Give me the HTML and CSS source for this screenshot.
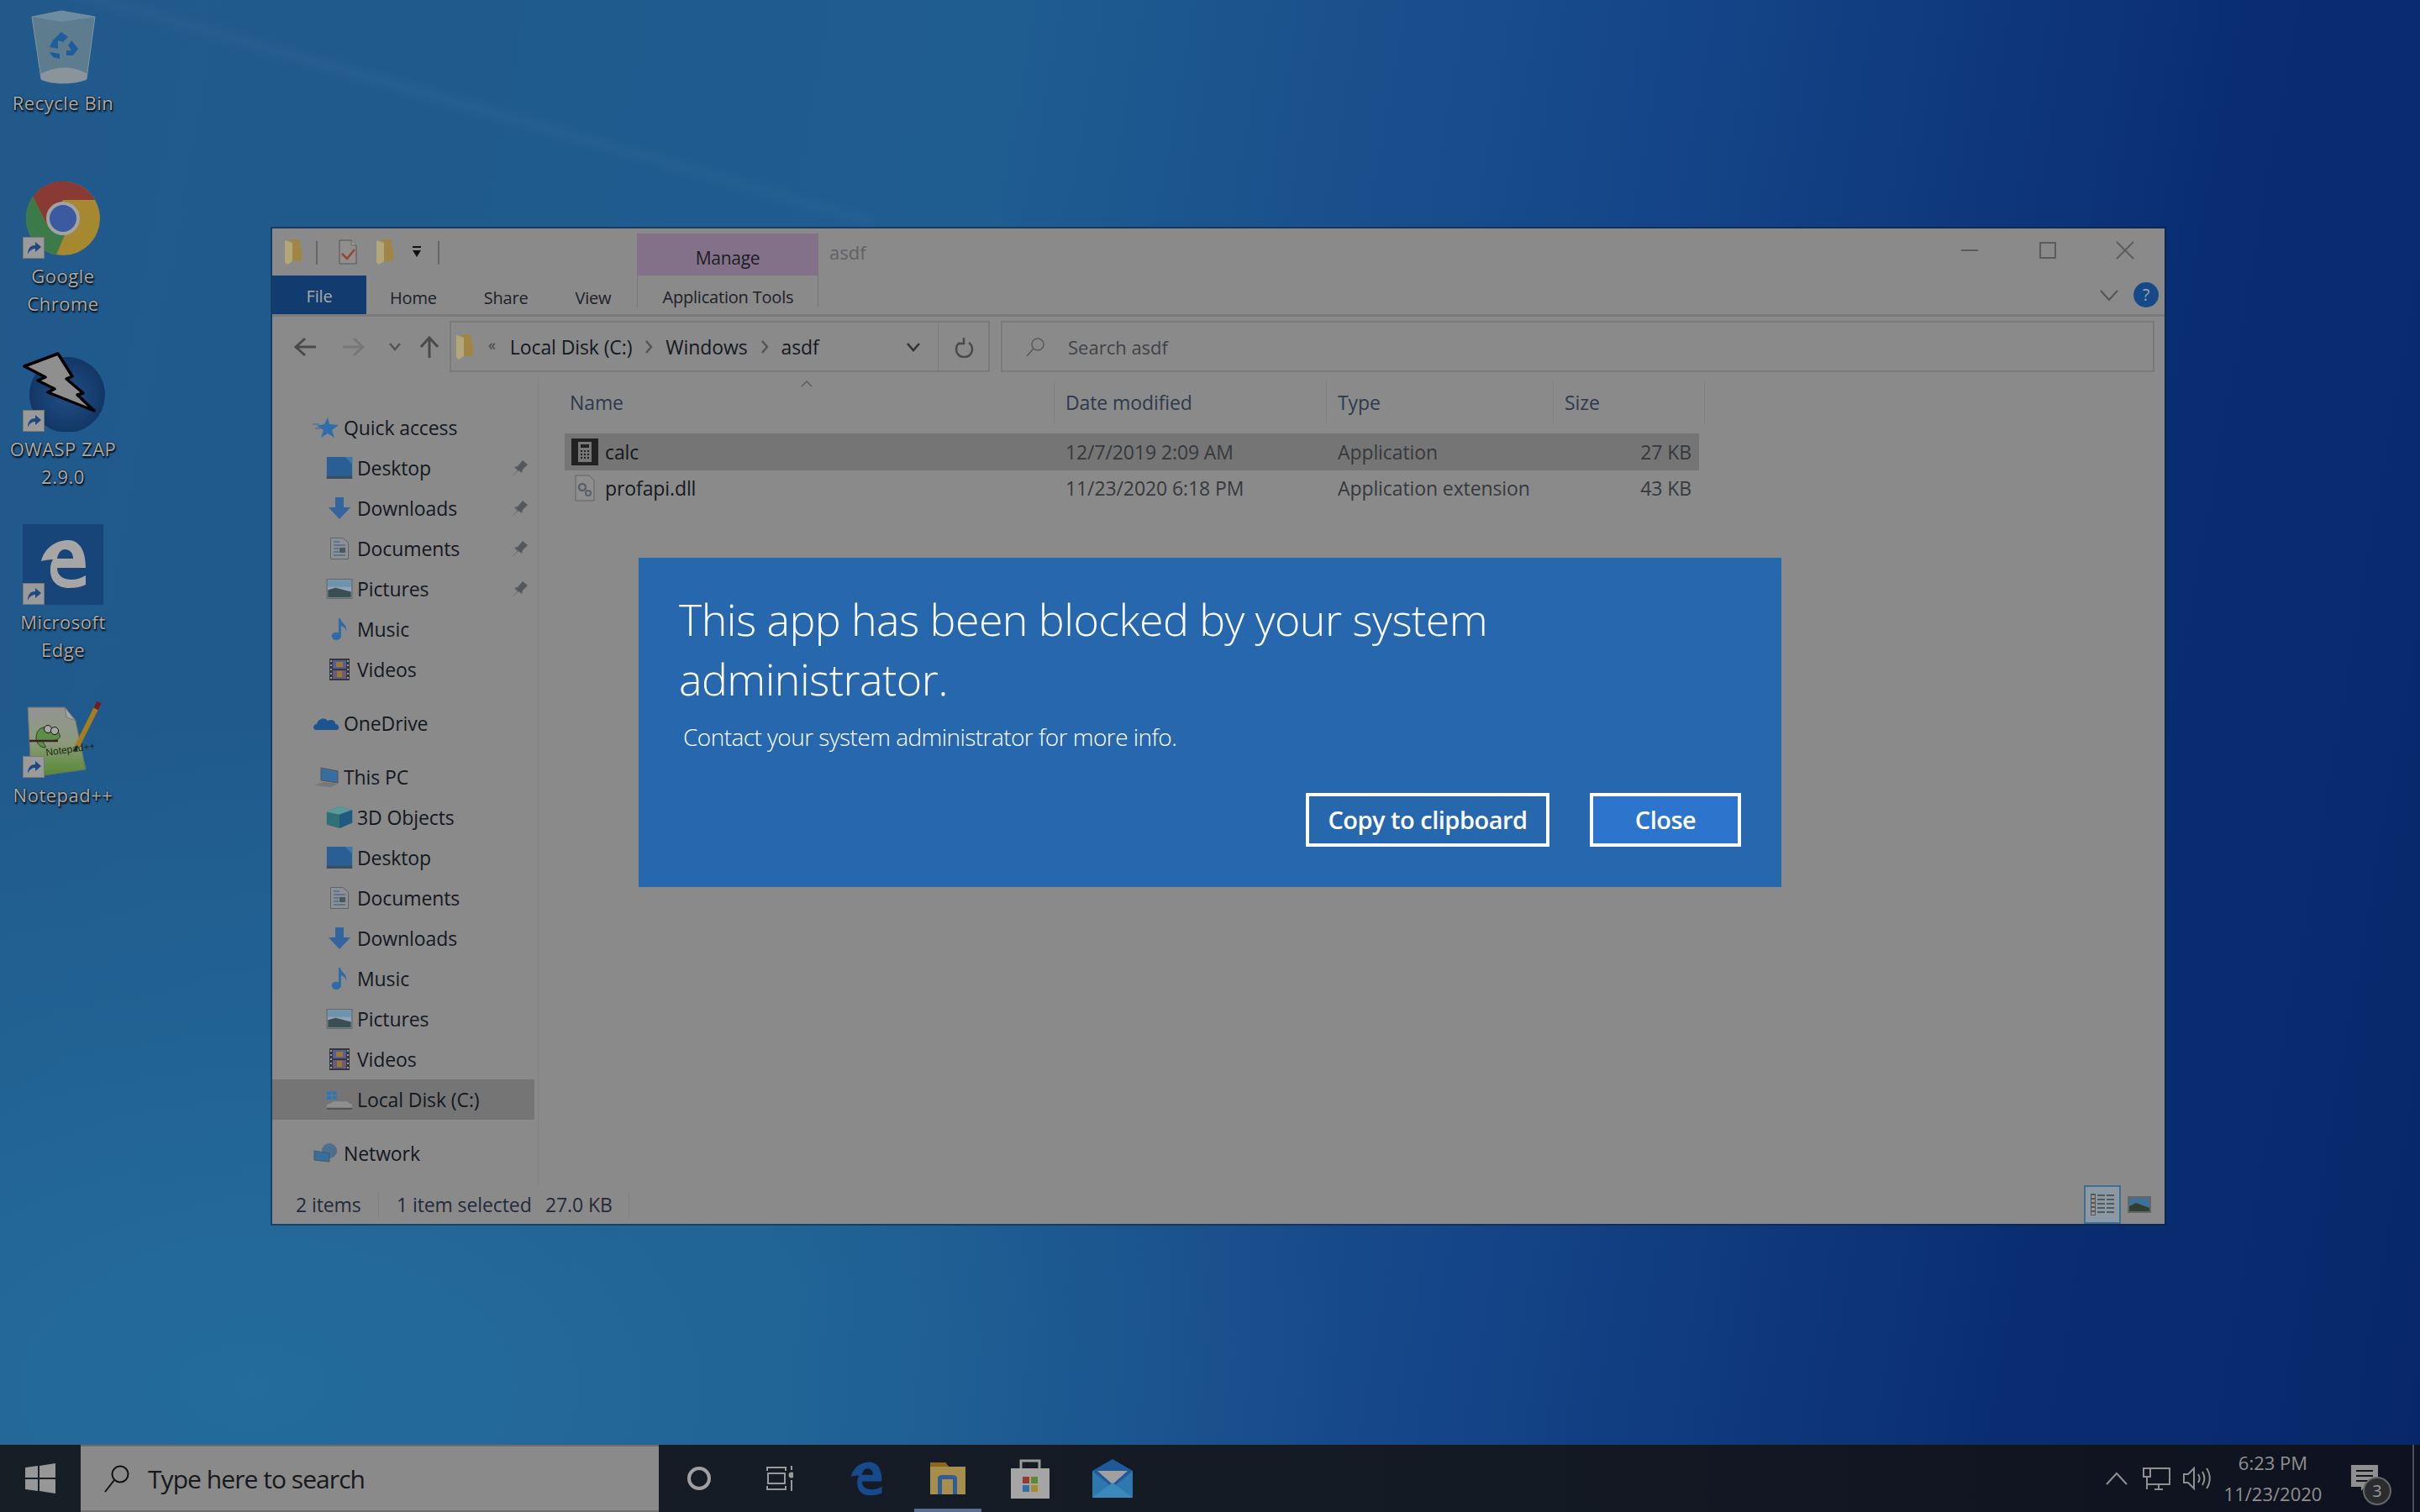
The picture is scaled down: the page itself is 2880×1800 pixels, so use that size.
FILE: index.html
```html
<!DOCTYPE html>
<html>
 <head>
  <meta charset="utf-8">
  <title>asdf</title>
  <link rel="stylesheet" href="styles.css">
 </head>
 <body>
  <svg class="defs" width="0" height="0">
   <symbol id="i-folder" viewBox="0 0 20 30"><path d="M4 0H18V10L20 11V26H8V4Z" fill="#9f8646"/><path d="M0 1 9 4V26L3 30 0 27Z" fill="#b3a679"/></symbol>
   <symbol id="i-short" viewBox="0 0 26 26"><rect x="0.500" y="0.500" width="25" height="25" fill="#9a9a9a" stroke="#777"/><path d="M6 21C6 13 10 10 15 10V6L22 12 15 18V14C11 14 8 16 6 21Z" fill="#1c4a80"/></symbol>
   <symbol id="i-desk" viewBox="0 0 28 24"><rect width="28" height="24" fill="#2a5f96"/><rect y="21" width="28" height="3" fill="#3c4d5c"/><path d="M20 0H28V8Z" fill="#3a77ad"/></symbol>
   <symbol id="i-down" viewBox="0 0 26 26"><path d="M8 0H18V12H26L13 26 0 12H8Z" fill="#32649d"/></symbol>
   <symbol id="i-docs" viewBox="0 0 22 26"><path d="M.5.5H15L21.500 6V25.500H.5Z" fill="#8f8f8f" stroke="#5d6670"/><path d="M4 5h7M4 9h14M4 13h6M4 17h6M4 21h14" stroke="#4a6c92" stroke-width="1.500"/><rect x="11" y="12" width="7" height="6" fill="#47585f"/></symbol>
   <symbol id="i-pics" viewBox="0 0 28 22"><rect x="1" y="1" width="26" height="20" fill="#8fa4b4" stroke="#666"/><path d="M2 12 10 10 26 14V20H2Z" fill="#3b4f50"/><rect x="2" y="2" width="24" height="7" fill="#6e93ad"/></symbol>
   <symbol id="i-music" viewBox="0 0 20 28"><ellipse cx="6" cy="23" rx="6" ry="5" fill="#2f6aa5"/><path d="M9 23V0H11C12 6 20 8 19 17 17 11 14 11 12 10V23Z" fill="#2f6aa5"/></symbol>
   <symbol id="i-video" viewBox="0 0 24 26"><rect width="24" height="26" fill="#33373c"/><rect x="4" y="2" width="16" height="10" fill="#5a5c9a"/><rect x="4" y="14" width="16" height="10" fill="#6a5a80"/><path d="M8 4h8v6H8zM9 15h6v7H9z" fill="#9a7a30"/><path d="M1 3h2M1 8h2M1 13h2M1 18h2M1 23h2M21 3h2M21 8h2M21 13h2M21 18h2M21 23h2" stroke="#999" stroke-width="2"/></symbol>
   <symbol id="i-pin" viewBox="0 0 24 24"><path d="M1 23 9 15 5 11 9 10 15 3 21 8 15 14 14 18 10 15Z" fill="#55595e"/></symbol>
   <symbol id="i-edge" viewBox="0 0 96 96"><path fill-rule="evenodd" d="M22 44C26 28 40 19 54 19 68 19 75 32 75 52H41C41 62 49 66 58 66 64 66 70 64 75 61V72C69 75 62 76 55 76 41 76 32 67 33 53 33 49 34 45 36 42 31 42 26 43 22 44ZM41 41H60C60 34 56 30 50 30 45 30 42 35 41 41Z"/></symbol>
  </svg>

  <div class="desktop">
   <div class="desk-icon">
    <div class="desk-pic">
     <svg width="96" height="96" viewBox="0 0 96 96"><path d="M11 14 46 7 86 14 76 88C60 94 36 94 22 88Z" fill="#5d7c8e" stroke="#7f95a2"/><path d="M11 14 46 20 86 14 46 7Z" fill="#6d8ca0"/><path d="M21 82C40 72 60 72 77 82L76 89C60 95 36 95 22 89Z" fill="#8a959b"/><path d="M36 42 46 32 54 38 48 44 42 42 42 52 32 50ZM58 42 66 52 60 60 52 60 52 54 58 54 54 48ZM32 56 44 58 44 64 36 62Z" fill="#1f5c9c"/></svg>
    </div>
    <div class="desk-label">Recycle Bin</div>
   </div>
   <div class="desk-icon">
    <div class="desk-pic">
     <svg width="96" height="96" viewBox="0 0 96 96"><circle cx="48" cy="48" r="44" fill="#a5882f"/><path d="M86 26H48L30 58 12 22A44 44 0 0 1 86 26Z" fill="#8a3a34"/><path d="M12 22 30 58 50 68 40 91A44 44 0 0 1 12 22Z" fill="#3d7a4a"/><circle cx="48" cy="48" r="20" fill="#a3a3a3"/><circle cx="48" cy="48" r="16" fill="#3b5aa0"/></svg>
     <svg class="short-mark"><use href="#i-short"/></svg>
    </div>
    <div class="desk-label">Google<br>Chrome</div>
   </div>
   <div class="desk-icon">
    <div class="desk-pic">
     <svg width="104" height="96" viewBox="0 0 104 96"><defs><radialGradient id="zap-g"><stop offset="0" stop-color="#214e86"/><stop offset="1" stop-color="#123766"/></radialGradient></defs><circle cx="53" cy="52" r="45" fill="url(#zap-g)"/><path d="M2 18 42 3 59 30 52 33 72 50 65 52 85 71 30 49 38 45 18 35 27 31Z" fill="#8f8f8f" stroke="#000" stroke-width="3.500" stroke-linejoin="round"/></svg>
     <svg class="short-mark"><use href="#i-short"/></svg>
    </div>
    <div class="desk-label">OWASP ZAP<br>2.9.0</div>
   </div>
   <div class="desk-icon">
    <div class="desk-pic desk-pic-edge">
     <svg class="edge-big" width="96" height="96"><use href="#i-edge"/></svg>
     <svg class="short-mark"><use href="#i-short"/></svg>
    </div>
    <div class="desk-label">Microsoft<br>Edge</div>
   </div>
   <div class="desk-icon">
    <div class="desk-pic">
     <svg width="96" height="96" viewBox="0 0 96 96">
      <defs><linearGradient id="np-g" x1="0" y1="0" x2="0" y2="1"><stop offset="0" stop-color="#949494"/><stop offset="0.500" stop-color="#8c9a7c"/><stop offset="1" stop-color="#54892f"/></linearGradient></defs>
      <path d="M6 12H50L63 28 75 86 10 95Z" fill="url(#np-g)" stroke="#6d6d6d"/>
      <path d="M50 12 52 24 63 28Z" fill="#a5a5a5" stroke="#777"/>
      <path d="M16 48C16 38 24 34 32 36 40 38 46 44 44 48 40 53 32 52 24 52 25 56 28 58 27 60 20 60 16 54 16 48Z" fill="#5c8f45" stroke="#24402a"/>
      <circle cx="30" cy="38" r="4.500" fill="#a8a8a8" stroke="#111"/><circle cx="38" cy="40" r="4.500" fill="#a8a8a8" stroke="#111"/>
      <path d="M8 52H42" stroke="#3a2020" stroke-width="2.500"/>
      <text class="np-word" x="28" y="70" transform="rotate(-8 28 70)">Notepad++</text>
      <path d="M65 58 89 10" stroke="#a67e1f" stroke-width="6"/><path d="M87 14 91 6" stroke="#6e1f1f" stroke-width="6"/><path d="M65 58 62 64" stroke="#222" stroke-width="3"/>
     </svg>
     <svg class="short-mark"><use href="#i-short"/></svg>
    </div>
    <div class="desk-label">Notepad++</div>
   </div>
  </div>

  <div class="window">
   <div class="titlebar">
    <svg class="qat-folder"><use href="#i-folder"/></svg>
    <span class="qat-sep"></span>
    <svg class="qat-check" width="22" height="30" viewBox="0 0 22 30"><path d="M1 1H15L21 7V29H1Z" fill="#8f8f8f" stroke="#555"/><path d="M15 1V7H21" fill="#9c9c9c" stroke="#666"/><path d="M4 17 10 23 19 12" fill="none" stroke="#9c4526" stroke-width="2.500"/></svg>
    <svg class="qat-folder qat-folder2"><use href="#i-folder"/></svg>
    <svg class="qat-drop" width="12" height="14" viewBox="0 0 12 14"><path d="M1 1H11" stroke="#111" stroke-width="2"/><path d="M1 5H11L6 13Z" fill="#111"/></svg>
    <span class="qat-sep qat-sep2"></span>
    <div class="manage-tab">Manage</div>
    <div class="win-title">asdf</div>
    <div class="caption">
     <svg width="22" height="22" viewBox="0 0 22 22"><path d="M0 11H20" stroke="#5c5c5c" stroke-width="2"/></svg>
     <svg width="22" height="22" viewBox="0 0 22 22"><rect x="2" y="2" width="18" height="18" fill="none" stroke="#5c5c5c" stroke-width="2"/></svg>
     <svg width="22" height="22" viewBox="0 0 22 22"><path d="M1 1 21 21M21 1 1 21" stroke="#5c5c5c" stroke-width="1.800"/></svg>
    </div>
   </div>
   <div class="tabs">
    <div class="tab-file">File</div>
    <div class="tab tab-home">Home</div>
    <div class="tab tab-share">Share</div>
    <div class="tab tab-view">View</div>
    <div class="tab-app">Application Tools</div>
    <svg class="ribbon-toggle" width="22" height="14" viewBox="0 0 22 14"><path d="M1 1 11 12 21 1" fill="none" stroke="#555" stroke-width="2"/></svg>
    <div class="help">?</div>
   </div>
   <div class="addr-row">
    <svg class="nav nav-back" width="28" height="24" viewBox="0 0 28 24"><path d="M14 2 3 12 14 22M3 12H27" fill="none" stroke="#4a4a4a" stroke-width="3"/></svg>
    <svg class="nav nav-fwd" width="28" height="24" viewBox="0 0 28 24"><path d="M14 2 25 12 14 22M25 12H1" fill="none" stroke="#777" stroke-width="3"/></svg>
    <svg class="nav nav-hist" width="16" height="10" viewBox="0 0 16 10"><path d="M2 1 8 8 14 1" fill="none" stroke="#555" stroke-width="2.500"/></svg>
    <svg class="nav nav-up" width="24" height="26" viewBox="0 0 24 26"><path d="M2 13 12 2 22 13M12 2V26" fill="none" stroke="#4a4a4a" stroke-width="3"/></svg>
    <div class="addr-box">
     <svg class="addr-folder"><use href="#i-folder"/></svg>
     <span class="crumb-more">«</span>
     <span class="crumb">Local Disk (C:)</span>
     <svg class="crumb-arrow" width="10" height="16" viewBox="0 0 10 16"><path d="M2 1 8 8 2 15" fill="none" stroke="#555" stroke-width="2.500"/></svg>
     <span class="crumb">Windows</span>
     <svg class="crumb-arrow" width="10" height="16" viewBox="0 0 10 16"><path d="M2 1 8 8 2 15" fill="none" stroke="#555" stroke-width="2.500"/></svg>
     <span class="crumb">asdf</span>
     <svg class="addr-drop" width="18" height="12" viewBox="0 0 18 12"><path d="M2 2 9 10 16 2" fill="none" stroke="#333" stroke-width="2.500"/></svg>
    </div>
    <div class="refresh-box">
     <svg width="24" height="26" viewBox="0 0 24 26"><path d="M6 7A9.500 9.500 0 1 0 17 7M11 1V8H4" transform="translate(1 1)" fill="none" stroke="#4a4a4a" stroke-width="2.500"/></svg>
    </div>
    <div class="search-box">
     <svg width="24" height="24" viewBox="0 0 24 24"><circle cx="14" cy="9" r="7" fill="none" stroke="#5a5a5a" stroke-width="1.500"/><path d="M9 14 1 23" stroke="#5a5a5a" stroke-width="1.500"/></svg>
     <span>Search asdf</span>
    </div>
   </div>

   <div class="content">
    <div class="sidebar">
     <div class="nav-row top"><svg class="nav-icon" viewBox="0 0 32 24"><path d="M18 0 20 8 31 9 23 15 26 24 18 19 10 24 13 15 5 10 14 8Z" fill="#2f6ea8"/><path d="M0 8H8M3 13H9" stroke="#4d7396" stroke-width="1.500"/></svg><span>Quick access</span></div>
     <div class="nav-row"><svg class="nav-icon"><use href="#i-desk"/></svg><span>Desktop</span><svg class="pin"><use href="#i-pin"/></svg></div>
     <div class="nav-row"><svg class="nav-icon"><use href="#i-down"/></svg><span>Downloads</span><svg class="pin"><use href="#i-pin"/></svg></div>
     <div class="nav-row"><svg class="nav-icon"><use href="#i-docs"/></svg><span>Documents</span><svg class="pin"><use href="#i-pin"/></svg></div>
     <div class="nav-row"><svg class="nav-icon"><use href="#i-pics"/></svg><span>Pictures</span><svg class="pin"><use href="#i-pin"/></svg></div>
     <div class="nav-row"><svg class="nav-icon"><use href="#i-music"/></svg><span>Music</span></div>
     <div class="nav-row"><svg class="nav-icon"><use href="#i-video"/></svg><span>Videos</span></div>
     <div class="nav-row top gap"><svg class="nav-icon" viewBox="0 0 32 18"><path d="M4 17C0 17 0 10 5 10 6 4 14 1 18 6 24 3 28 8 27 10 32 10 33 17 28 17Z" fill="#1d5490"/></svg><span>OneDrive</span></div>
     <div class="nav-row top gap"><svg class="nav-icon" viewBox="0 0 32 24"><path d="M10 1 30 5V19L10 16Z" fill="#356e9f" stroke="#555"/><path d="M2 22 12 18 30 20 22 24Z" fill="#777"/></svg><span>This PC</span></div>
     <div class="nav-row"><svg class="nav-icon" viewBox="0 0 28 24"><path d="M0 6 14 0 28 4V18L14 24 0 20Z" fill="#2f7078"/><path d="M0 6 14 0 28 4 14 9Z" fill="#5a9a9a"/><path d="M14 9 28 4V18L14 24Z" fill="#1f5a80"/></svg><span>3D Objects</span></div>
     <div class="nav-row"><svg class="nav-icon"><use href="#i-desk"/></svg><span>Desktop</span></div>
     <div class="nav-row"><svg class="nav-icon"><use href="#i-docs"/></svg><span>Documents</span></div>
     <div class="nav-row"><svg class="nav-icon"><use href="#i-down"/></svg><span>Downloads</span></div>
     <div class="nav-row"><svg class="nav-icon"><use href="#i-music"/></svg><span>Music</span></div>
     <div class="nav-row"><svg class="nav-icon"><use href="#i-pics"/></svg><span>Pictures</span></div>
     <div class="nav-row"><svg class="nav-icon"><use href="#i-video"/></svg><span>Videos</span></div>
     <div class="nav-row selected"><svg class="nav-icon" viewBox="0 0 28 24"><path d="M0 3H5V7H0ZM6 3H11V7H6ZM0 8H5V12H0ZM6 8H11V12H6Z" fill="#2f78b5"/><path d="M0 18 8 14H22L28 18V22H0Z" fill="#8f8f8f"/><rect y="21" width="28" height="2" fill="#555"/></svg><span>Local Disk (C:)</span></div>
     <div class="nav-row top gap"><svg class="nav-icon" viewBox="0 0 32 24"><circle cx="20" cy="9" r="9" fill="#4b6f8f"/><path d="M2 9 20 12V22L2 20Z" fill="#356e9f" stroke="#555"/></svg><span>Network</span></div>
    </div>
    <div class="files">
     <svg class="sort-caret" width="14" height="8" viewBox="0 0 14 8"><path d="M1 7 7 1 13 7" fill="none" stroke="#555" stroke-width="1.200"/></svg>
     <div class="file-head">
      <div class="col-h">Name</div>
      <div class="col-h">Date modified</div>
      <div class="col-h">Type</div>
      <div class="col-h">Size</div>
     </div>
     <div class="file-row selected">
      <div class="cell-name">
       <svg class="file-icon" width="32" height="32" viewBox="0 0 32 32"><rect width="32" height="32" fill="#222"/><rect x="8" y="4" width="16" height="24" fill="#777"/><rect x="11" y="7" width="10" height="4" fill="#222"/><path d="M11 14h2v2h-2zM15 14h2v2h-2zM19 14h2v2h-2zM11 18h2v2h-2zM15 18h2v2h-2zM19 18h2v2h-2zM11 22h2v2h-2zM15 22h2v2h-2zM19 22h2v2h-2z" fill="#222"/></svg>
       <span>calc</span>
      </div>
      <div class="cell">12/7/2019 2:09 AM</div>
      <div class="cell">Application</div>
      <div class="cell cell-size">27 KB</div>
     </div>
     <div class="file-row">
      <div class="cell-name">
       <svg class="file-icon" width="32" height="32" viewBox="0 0 32 32"><path d="M5 1H21L27 7V31H5Z" fill="#8e8e8e" stroke="#606468"/><circle cx="13" cy="15" r="4" fill="none" stroke="#5a6066" stroke-width="2.500"/><circle cx="20" cy="22" r="3" fill="none" stroke="#5a6066" stroke-width="2"/></svg>
       <span>profapi.dll</span>
      </div>
      <div class="cell">11/23/2020 6:18 PM</div>
      <div class="cell">Application extension</div>
      <div class="cell cell-size">43 KB</div>
     </div>
    </div>
   </div>

   <div class="statusbar">
    <span class="st-count">2 items</span>
    <span class="st-sel">1 item selected</span>
    <span class="st-size">27.0 KB</span>
    <div class="view-btns">
     <div class="view-on">
      <svg width="28" height="26" viewBox="0 0 28 26"><rect x="0" y="0" width="6" height="26" fill="#555"/><path d="M1 2h4v3H1zM1 7h4v3H1zM1 12h4v3H1zM1 17h4v3H1zM1 22h4v3H1z" fill="#999"/><path d="M8 2h9M19 2h9M8 7h9M19 7h9M8 12h9M19 12h9M8 17h9M19 17h9M8 22h9M19 22h9" stroke="#444" stroke-width="1.500"/></svg>
     </div>
     <svg class="view-thumb" width="28" height="20" viewBox="0 0 28 20"><rect x="1" y="1" width="26" height="18" fill="#3e7098" stroke="#666" stroke-width="2"/><path d="M2 12 10 8 26 14V18H2Z" fill="#2f4030"/></svg>
    </div>
   </div>
  </div>

  <div class="dialog">
   <div class="dlg-title">This app has been blocked by your system administrator.</div>
   <div class="dlg-body">Contact your system administrator for more info.</div>
   <div class="dlg-btns">
    <div class="btn">Copy to clipboard</div>
    <div class="btn btn-close">Close</div>
   </div>
  </div>

  <div class="taskbar">
   <div class="start">
    <svg width="36" height="36" viewBox="0 0 36 36"><path d="M0 5 15 3V17H0ZM17 3 36 0V17H17ZM0 19H15V33L0 31ZM17 19H36V36L17 33Z" fill="#979797"/></svg>
   </div>
   <div class="tb-search">
    <svg width="38" height="34" viewBox="0 0 34 34"><circle cx="21" cy="12" r="9.500" fill="none" stroke="#111" stroke-width="2"/><path d="M14 19 3 33" stroke="#111" stroke-width="2"/></svg>
    <span>Type here to search</span>
   </div>
   <div class="tb-cell"><svg width="30" height="32" viewBox="0 0 30 32"><circle cx="15" cy="16" r="12" fill="none" stroke="#a0a0a0" stroke-width="4"/></svg></div>
   <div class="tb-cell"><svg width="32" height="30" viewBox="0 0 32 30"><path d="M1 6V1M23 6V1M1 2H23M2 9H22V21H2ZM1 24V29M23 24V29M1 28H23" fill="none" stroke="#9a9a9a" stroke-width="2"/><path d="M30 0V5M30 17V30" stroke="#9a9a9a" stroke-width="2"/><circle cx="30" cy="11" r="3.500" fill="#9a9a9a"/></svg></div>
   <div class="tb-cell tb-wide"><svg class="tb-edge" width="46" height="46" viewBox="14 14 66 66"><use href="#i-edge" width="96" height="96"/></svg></div>
   <div class="tb-cell tb-wide tb-active">
    <svg width="42" height="38" viewBox="0 0 42 38"><path d="M0 0H18L22 5H42V38H0Z" fill="#a88e4c"/><path d="M0 0H18L22 5H0Z" fill="#8a6818"/><path d="M9 38V20C9 15 11 15 20 15 30 15 32 15 32 20V38H27V20H14V38Z" fill="#2f5e96"/></svg>
   </div>
   <div class="tb-cell tb-wide">
    <svg width="46" height="48" viewBox="0 0 46 48"><path d="M12 12V3H34V12" fill="none" stroke="#9a9a9a" stroke-width="3"/><rect y="12" width="46" height="36" fill="#a5a5a5"/><rect x="14" y="22" width="8" height="8" fill="#9a3a2a"/><rect x="24" y="22" width="8" height="8" fill="#5a8a30"/><rect x="14" y="32" width="8" height="8" fill="#2f70a8"/><rect x="24" y="32" width="8" height="8" fill="#a88a2a"/></svg>
   </div>
   <div class="tb-cell tb-wide">
    <svg width="48" height="46" viewBox="0 -4 48 46"><rect y="10" width="48" height="32" fill="#2f78ae"/><path d="M0 10 24 30 48 10 24 -4Z" fill="#1e5a9a"/><path d="M6 10H42L24 26Z" fill="#a0a0a0"/><path d="M0 42 24 24 48 42Z" fill="#3a88bc"/></svg>
   </div>
   <div class="tray">
    <div class="tray-cell"><svg width="26" height="16" viewBox="0 0 26 16"><path d="M1 15 13 2 25 15" fill="none" stroke="#8f8f8f" stroke-width="2"/></svg></div>
    <div class="tray-cell"><svg width="34" height="28" viewBox="0 0 34 28"><path d="M1 2H32V21H5M5 12V27M14 27H24M19 21V27" fill="none" stroke="#8f8f8f" stroke-width="2"/><rect x="1" y="2" width="8" height="10" fill="none" stroke="#8f8f8f" stroke-width="2"/></svg></div>
    <div class="tray-cell"><svg width="34" height="28" viewBox="0 0 34 28"><path d="M1 9H6L13 2V26L6 19H1Z" fill="none" stroke="#8f8f8f" stroke-width="2"/><path d="M18 9C20 12 20 16 18 19M23 6C26 11 26 17 23 22M28 2C33 9 33 19 28 26" fill="none" stroke="#8f8f8f" stroke-width="2"/></svg></div>
    <div class="clock"><div>6:23 PM</div><div>11/23/2020</div></div>
    <div class="action">
     <svg width="32" height="32" viewBox="0 0 32 32"><path d="M0 0H32V26H16L12 31V26H0Z" fill="#8f8f8f"/><path d="M6 7H26M6 13H26M6 19H26" stroke="#12161f" stroke-width="2"/></svg>
     <div class="badge">3</div>
    </div>
    <div class="show-desk"></div>
   </div>
  </div>
 </body>
</html>
```

FILE: styles.css
```css
html, body {
  margin: 0;
  padding: 0;
  width: 2880px;
  height: 1800px;
  overflow: hidden;
}
body {
  position: relative;
  display: flex;
  flex-direction: column;
  font-family: "Open Sans", "Liberation Sans", sans-serif;
  background-image:
    linear-gradient(196deg, rgba(255,255,255,0) 240px, rgba(255,255,255,0.02) 254px, rgba(255,255,255,0) 268px),
    radial-gradient(ellipse 1300px 800px at 300px 1650px, #236c9c 0%, rgba(35,108,156,0) 100%),
    linear-gradient(100deg, #21598b 0%, #1f5c90 38%, #154689 62%, #0a2d72 84%, #08276b 100%);
  background-size: 1040px 272px, 100% 100%, 100% 100%;
  background-repeat: no-repeat;
}
.defs {
  position: absolute;
}

/* desktop icons */
.desktop {
  flex: 1;
  padding-top: 6px;
}
.desk-icon {
  width: 150px;
  height: 206px;
}
.desk-pic {
  position: relative;
  width: 96px;
  height: 96px;
  margin-left: 27px;
}
.desk-pic-edge {
  background-color: #174479;
}
.edge-big {
  fill: #a6a6a6;
}
.np-word {
  font-family: "Liberation Sans", sans-serif;
  font-size: 12px;
  fill: #1c2a14;
}
.short-mark {
  position: absolute;
  left: 0;
  bottom: 0;
  width: 26px;
  height: 26px;
}
.desk-label {
  margin-top: 4px;
  font-size: 22px;
  line-height: 33px;
  text-align: center;
  color: #a9a9a9;
  letter-spacing: 0.5px;
  text-shadow: 1px 2px 2px #000, 0 0 2px #111;
}

/* explorer window */
.window {
  position: absolute;
  left: 324px;
  top: 272px;
  width: 2252px;
  height: 1185px;
  display: flex;
  flex-direction: column;
  background-color: #8a8a8a;
  color: #14181f;
  font-size: 23px;
  letter-spacing: -0.1px;
  box-shadow: 0 0 0 2px rgba(10,30,60,0.5);
}
.titlebar {
  height: 56px;
  display: flex;
  align-items: center;
  position: relative;
}
.qat-folder {
  width: 20px;
  height: 30px;
  margin-left: 15px;
}
.qat-sep {
  width: 2px;
  height: 28px;
  margin-left: 17px;
  margin-top: 2px;
  background-color: #666;
}
.qat-check {
  margin-left: 25px;
}
.qat-folder2 {
  margin-left: 23px;
}
.qat-drop {
  margin-left: 22px;
}
.qat-sep2 {
  margin-left: 19px;
}
.manage-tab {
  width: 216px;
  height: 50px;
  margin-left: 235px;
  margin-top: 6px;
  display: flex;
  align-items: center;
  justify-content: center;
  padding-top: 8px;
  box-sizing: border-box;
  background-color: #83718a;
  font-size: 21px;
  letter-spacing: -0.3px;
  color: #1d1d24;
}
.win-title {
  margin-left: 13px;
  color: #5f6266;
  font-size: 22px;
  letter-spacing: 0;
}
.caption {
  margin-left: auto;
  margin-right: 36px;
  display: flex;
  gap: 70px;
  margin-top: -4px;
}
.tabs {
  height: 46px;
  display: flex;
  align-items: center;
  font-size: 20px;
  letter-spacing: -0.2px;
  color: #1d2128;
  border-bottom: 3px solid #7b7b7b;
}
.tab-file {
  width: 112px;
  height: 46px;
  line-height: 50px;
  text-align: center;
  background-color: #123c70;
  color: #a8a8a8;
}
.tab {
  margin-top: 6px;
}
.tab-home {
  margin-left: 28px;
}
.tab-share {
  margin-left: 56px;
}
.tab-view {
  margin-left: 56px;
}
.tab-app {
  width: 216px;
  height: 38px;
  margin-left: 31px;
  align-self: flex-start;
  line-height: 52px;
  text-align: center;
  border-left: 1px solid #777;
  border-right: 1px solid #777;
  box-sizing: border-box;
}
.ribbon-toggle {
  margin-left: auto;
  margin-right: 18px;
  margin-top: 2px;
}
.help {
  width: 30px;
  height: 30px;
  margin-right: 7px;
  border-radius: 50%;
  background-color: #154a86;
  color: #9aa5b0;
  font-size: 20px;
  line-height: 30px;
  text-align: center;
}
.addr-row {
  height: 61px;
  margin-top: 5px;
  margin-bottom: 6px;
  display: flex;
  align-items: center;
  padding-right: 12px;
}
.nav {
  flex: none;
}
.nav-back {
  margin-left: 25px;
}
.nav-fwd {
  margin-left: 30px;
}
.nav-hist {
  margin-left: 27px;
}
.nav-up {
  margin-left: 21px;
}
.addr-box {
  width: 582px;
  height: 61px;
  margin-left: 12px;
  box-sizing: border-box;
  display: flex;
  align-items: center;
  border: 2px solid #7a7a7a;
  border-right-width: 1px;
  color: #14181f;
}
.addr-folder {
  width: 20px;
  height: 30px;
  margin-left: 6px;
}
.crumb-more {
  margin-left: 18px;
  margin-right: 2px;
  margin-top: -6px;
  font-size: 18px;
  color: #444;
}
.crumb {
  margin-left: 15px;
}
.crumb-arrow {
  margin-left: 15px;
}
.addr-drop {
  margin-left: auto;
  margin-right: 20px;
}
.refresh-box {
  width: 61px;
  height: 61px;
  box-sizing: border-box;
  display: flex;
  align-items: center;
  justify-content: center;
  border: 2px solid #7a7a7a;
  border-left: 0;
}
.search-box {
  flex: 1;
  height: 61px;
  margin-left: 13px;
  box-sizing: border-box;
  display: flex;
  align-items: center;
  gap: 26px;
  padding-left: 28px;
  border: 2px solid #7a7a7a;
  color: #3f4348;
  font-size: 22px;
  letter-spacing: 0;
}

/* nav pane + file list */
.content {
  flex: 1;
  display: flex;
  min-height: 0;
}
.sidebar {
  width: 312px;
  padding-top: 36px;
  padding-right: 4px;
  padding-bottom: 40px;
  border-right: 1px solid #838383;
}
.nav-row {
  height: 48px;
  display: flex;
  align-items: center;
  padding-left: 64px;
  padding-right: 5px;
  box-sizing: border-box;
}
.nav-row.top {
  padding-left: 48px;
}
.nav-row.gap {
  margin-top: 16px;
}
.nav-row.selected {
  background-color: #757575;
}
.nav-icon {
  width: 32px;
  height: 26px;
  margin-right: 5px;
  flex: none;
}
.pin {
  width: 24px;
  height: 24px;
  margin-left: auto;
}
.files {
  position: relative;
  flex: 1;
  padding-left: 31px;
}
.sort-caret {
  position: absolute;
  left: 312px;
  top: 4px;
}
.file-head {
  height: 51px;
  margin-top: 4px;
  display: grid;
  grid-template-columns: 583px 324px 270px 180px;
  width: 1357px;
}
.col-h {
  display: flex;
  align-items: center;
  padding-left: 13px;
  border-right: 1px solid #808080;
  color: #2e3a4c;
}
.col-h:first-child {
  padding-left: 6px;
}
.file-row {
  width: 1350px;
  height: 42px;
  display: grid;
  grid-template-columns: 583px 324px 270px 173px;
  align-items: center;
}
.file-head + .file-row {
  margin-top: 12px;
}
.file-row.selected {
  height: 44px;
  background-color: #757575;
}
.cell-name {
  display: flex;
  align-items: center;
  padding-left: 8px;
}
.file-icon {
  margin-right: 8px;
}
.cell {
  padding-left: 13px;
  color: #36393d;
}
.cell-size {
  padding-right: 9px;
  text-align: right;
}
.statusbar {
  height: 46px;
  display: flex;
  align-items: center;
  position: relative;
  color: #232a3a;
  font-size: 23px;
  letter-spacing: -0.1px;
}
.st-count {
  width: 98px;
  margin-left: 28px;
  border-right: 1px solid #808080;
}
.st-sel {
  margin-left: 21px;
  width: 177px;
}
.st-size {
  width: 99px;
  border-right: 1px solid #808080;
}
.view-btns {
  margin-left: auto;
  margin-right: 16px;
  display: flex;
  align-items: center;
  gap: 8px;
}
.view-on {
  width: 44px;
  height: 46px;
  box-sizing: border-box;
  display: flex;
  align-items: center;
  justify-content: center;
  border: 2px solid #3e6f90;
  background-color: #8a99a3;
}

/* blocked dialog */
.dialog {
  position: absolute;
  left: 760px;
  top: 664px;
  width: 1360px;
  height: 392px;
  box-sizing: border-box;
  display: flex;
  flex-direction: column;
  padding: 37px 48px 0;
  background-color: #2767ae;
  color: #fff;
}
.dlg-title {
  width: 1040px;
  font-size: 52px;
  font-weight: 300;
  line-height: 71px;
  letter-spacing: -0.6px;
}
.dlg-body {
  margin-top: 14px;
  margin-left: 5px;
  font-size: 28px;
  font-weight: 300;
  line-height: 40px;
  letter-spacing: -0.55px;
}
.dlg-btns {
  display: flex;
  justify-content: flex-end;
  gap: 48px;
  margin-top: 47px;
}
.btn {
  height: 64px;
  width: 290px;
  box-sizing: border-box;
  border: 4px solid #fff;
  text-align: center;
  font-size: 29px;
  font-weight: 600;
  line-height: 56px;
  letter-spacing: -0.5px;
}
.btn-close {
  width: 180px;
  background-color: #2d74cc;
}

/* taskbar */
.taskbar {
  height: 80px;
  display: flex;
  align-items: stretch;
  flex: none;
  background: linear-gradient(90deg, #161e26 0%, #141a24 60%, #0e1220 100%);
}
.start {
  width: 96px;
  display: flex;
  align-items: center;
  justify-content: center;
}
.tb-search {
  width: 688px;
  box-sizing: border-box;
  display: flex;
  align-items: center;
  padding-left: 24px;
  gap: 18px;
  background-color: #8a8a8a;
  border-top: 2px solid #6e6e6e;
  border-bottom: 2px solid #6e6e6e;
  color: #16181c;
  font-size: 30px;
  letter-spacing: -0.95px;
}
.tb-cell {
  width: 96px;
  display: flex;
  align-items: center;
  justify-content: center;
  position: relative;
}
.tb-wide {
  width: 98px;
}
.tb-wide:nth-child(5) {
  margin-left: 5px;
}
.tb-edge {
  fill: #174a8c;
}
.tb-active::after {
  content: "";
  position: absolute;
  left: 9px;
  bottom: 0;
  width: 80px;
  height: 4px;
  background-color: #566f8f;
}
.tray {
  margin-left: auto;
  display: flex;
  align-items: stretch;
  color: #8f8f8f;
}
.tray-cell {
  width: 48px;
  display: flex;
  align-items: center;
  justify-content: center;
}
.clock {
  width: 132px;
  display: flex;
  flex-direction: column;
  justify-content: center;
  text-align: center;
  font-size: 22px;
  line-height: 37px;
}
.action {
  position: relative;
  width: 100px;
  box-sizing: border-box;
  padding-left: 27px;
  padding-top: 24px;
}
.badge {
  position: absolute;
  left: 41px;
  top: 38px;
  width: 30px;
  height: 30px;
  border-radius: 50%;
  border: 2px solid #666;
  background-color: #2a2c30;
  font-size: 20px;
  line-height: 30px;
  text-align: center;
  color: #9a9a9a;
}
.show-desk {
  width: 7px;
  border-left: 2px solid #4c4f57;
}
```
